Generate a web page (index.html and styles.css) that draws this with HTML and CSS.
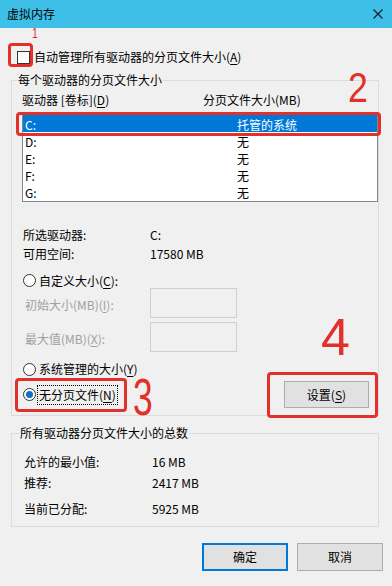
FILE: index.html
```html
<!DOCTYPE html>
<html lang="zh-CN">
<head>
    <meta charset="UTF-8" />
    <title>虚拟内存</title>
    <link rel="stylesheet" href="styles.css">
</head>
<body>
<div class="window">
    <div class="titlebar">
        <span class="title">虚拟内存</span>
        <svg class="close" width="10" height="10" viewBox="0 0 10 10"><path d="M0.5 0.5L9.5 9.5M9.5 0.5L0.5 9.5" stroke="#1a1a1a" stroke-width="1.1" fill="none"/></svg>
    </div>
    <div class="content">
        <div class="check-row">
            <span class="checkbox"></span>
            <span>自动管理所有驱动器的分页文件大小(<u>A</u>)</span>
        </div>

        <fieldset class="group drives">
            <legend>每个驱动器的分页文件大小</legend>
            <div class="list-head">
                <span class="head-drive">驱动器 [卷标](<u>D</u>)</span>
                <span>分页文件大小(MB)</span>
            </div>
            <div class="listbox">
                <div class="row selected"><span class="drive">C:</span><span>托管的系统</span></div>
                <div class="row"><span class="drive">D:</span><span>无</span></div>
                <div class="row"><span class="drive">E:</span><span>无</span></div>
                <div class="row"><span class="drive">F:</span><span>无</span></div>
                <div class="row"><span class="drive">G:</span><span>无</span></div>
            </div>
            <div class="info">
                <div class="info-row"><span class="key">所选驱动器:</span><span>C:</span></div>
                <div class="info-row"><span class="key">可用空间:</span><span>17580 MB</span></div>
            </div>
            <div class="radio-row custom"><span class="radio"></span><span>自定义大小(<u>C</u>):</span></div>
            <div class="size-row"><span class="size-key">初始大小(MB)(<u>I</u>):</span><span class="textbox"></span></div>
            <div class="size-row second"><span class="size-key">最大值(MB)(<u>X</u>):</span><span class="textbox"></span></div>
            <div class="radio-row system"><span class="radio"></span><span>系统管理的大小(<u>Y</u>)</span></div>
            <div class="action-row">
                <div class="radio-row"><span class="radio checked"></span><span class="focus">无分页文件(<u>N</u>)</span></div>
                <button class="btn set">设置(<u>S</u>)</button>
            </div>
        </fieldset>

        <fieldset class="group totals">
            <legend>所有驱动器分页文件大小的总数</legend>
            <div class="total-row"><span class="key">允许的最小值:</span><span>16 MB</span></div>
            <div class="total-row r2"><span class="key">推荐:</span><span>2417 MB</span></div>
            <div class="total-row r3"><span class="key">当前已分配:</span><span>5925 MB</span></div>
        </fieldset>

        <div class="footer">
            <button class="btn default">确定</button>
            <button class="btn">取消</button>
        </div>
    </div>

    <!-- red annotations drawn on top of the screenshot -->
    <div class="mark m1"></div>
    <div class="mark m2"></div>
    <div class="mark m3"></div>
    <div class="mark m4"></div>
    <span class="num n1">1</span>
    <span class="num n2">2</span>
    <span class="num n3">3</span>
    <span class="num n4">4</span>
</div>
</body>
</html>
```

FILE: styles.css
```css
* {
    box-sizing: border-box;
}
body {
    margin: 0;
    background: #f0f0f0;
    font-family: "Noto Sans CJK SC", "Noto Sans", sans-serif;
    font-size: 12px;
    line-height: 16px;
    color: #000;
}
u {
    text-decoration-thickness: 1px;
    text-underline-offset: 2px;
}
.window {
    position: relative;
    width: 392px;
    height: 586px;
    background: #f0f0f0;
    overflow: hidden;
}
.titlebar {
    height: 28px;
    background: #3ebfe8;
    display: flex;
    align-items: center;
    justify-content: space-between;
    padding: 0 9px 0 7px;
}
.content {
    padding: 0 13px 0 11px;
}
.check-row {
    display: flex;
    align-items: center;
    height: 16px;
    margin-top: 21px;
    padding-left: 6px;
}
.checkbox {
    width: 13px;
    height: 13px;
    border: 1px solid #333;
    background: #fff;
    margin-right: 4px;
}

/* group boxes */
.group {
    margin: 0;
    min-width: 0;
    border: 1px solid #dcdcdc;
}
.group legend {
    padding: 0 1px;
    margin-left: -5px;
    line-height: 16px;
}
.drives {
    margin-top: 7px;
    padding: 4px 0 7px 10px;
}
.totals {
    margin-top: 9px;
    padding: 12px 0 8px 12px;
}

.list-head {
    display: flex;
    height: 16px;
}
.head-drive {
    width: 181px;
}
.listbox {
    margin-top: 4px;
    width: 356px;
    height: 90px;
    border: 1px solid #828790;
    background: #fff;
    padding-top: 2px;
}
.row {
    display: flex;
    height: 17px;
    line-height: 19px;
    padding-left: 2px;
}
.row .drive {
    width: 212px;
}
.row.selected {
    background: #0078d7;
    color: #fff;
}

.info {
    margin-top: 23px;
}
.info-row {
    display: flex;
    height: 19px;
    line-height: 19px;
    padding-left: 1px;
}
.info-row .key {
    width: 127px;
}

.radio-row {
    display: flex;
    align-items: center;
    height: 16px;
    padding-left: 1px;
}
.radio {
    width: 13px;
    height: 13px;
    border: 1px solid #333;
    border-radius: 50%;
    background: #fff;
    margin-right: 3px;
    position: relative;
}
.radio.checked {
    margin-right: 1px;
}
.radio.checked::after {
    content: "";
    position: absolute;
    left: 2px;
    top: 2px;
    width: 7px;
    height: 7px;
    border-radius: 50%;
    background: #0a6fd0;
}
.custom {
    margin-top: 10px;
    height: 15px;
}
.size-row {
    display: flex;
    align-items: center;
    height: 30px;
}
.size-row.second {
    margin-top: 4px;
}
.size-key {
    width: 128px;
    padding-left: 3px;
    padding-top: 3px;
    color: #a0a0a0;
}
.textbox {
    width: 87px;
    height: 30px;
    border: 1px solid #cfcfcf;
    background: #f0f0f0;
}
.system {
    margin-top: 9px;
}
.action-row {
    display: flex;
    justify-content: space-between;
    align-items: center;
    height: 27px;
    margin-top: 4px;
    padding-right: 9px;
}
.focus {
    border: 1px dotted #000;
    padding: 1px 1px;
    line-height: 16px;
}

.btn {
    font: inherit;
    color: #000;
    background: #e1e1e1;
    border: 1px solid #adadad;
    padding: 0;
    width: 86px;
    height: 28px;
}
.btn.set {
    width: 85px;
    height: 27px;
}
.btn.default {
    border: 2px solid #0078d7;
}

.total-row {
    display: flex;
    height: 18px;
    line-height: 18px;
}
.total-row.r2 {
    margin-top: 3px;
}
.total-row.r3 {
    margin-top: 8px;
}
.total-row .key {
    width: 128px;
}

.footer {
    display: flex;
    justify-content: flex-end;
    gap: 9px;
    margin-top: 16px;
    margin-right: -4px;
}

/* annotations */
.mark {
    position: absolute;
    border: 3px solid #e2302a;
    border-radius: 4px;
}
.m1 { left: 8px; top: 43px; width: 25px; height: 24px; }
.m2 { left: 16px; top: 112px; width: 365px; height: 24px; }
.m3 { left: 15px; top: 378px; width: 112px; height: 34px; }
.m4 { left: 267px; top: 372px; width: 111px; height: 46px; }
.num {
    position: absolute;
    color: #e2302a;
    font-family: "Liberation Sans", sans-serif;
    line-height: 0.74;
    transform-origin: left top;
}
.n1 { left: 32px; top: 27px; font-size: 15px; transform: scaleX(0.7); }
.n2 { left: 348px; top: 72px; font-size: 42px; transform: scaleX(0.85); }
.n3 { left: 133px; top: 378px; font-size: 52px; transform: scaleX(0.68); }
.n4 { left: 321px; top: 318px; font-size: 52px; }
```
